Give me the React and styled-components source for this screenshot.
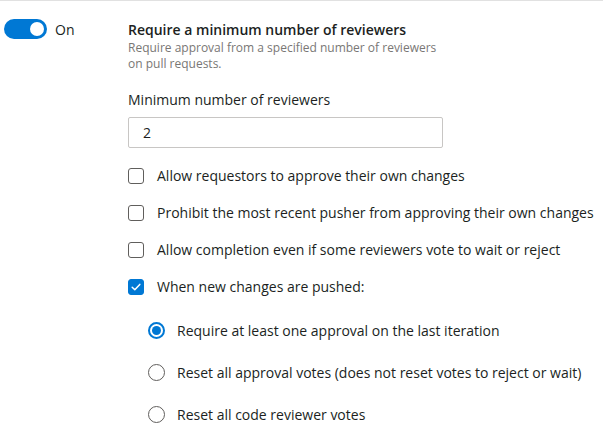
import React from "react";
import styled, { createGlobalStyle } from "styled-components";

const Global = createGlobalStyle`
  html, body { margin: 0; padding: 0; background: #ffffff; overflow: hidden; }
  body { font-family: "Open Sans", "Noto Sans", sans-serif; color: #201f1e; }
`;

const Page = styled.div`
  width: 603px;
  height: 433px;
  border-top: 1px solid #e1e1e1;
  display: flex;
  box-sizing: border-box;
  overflow: hidden;
`;

const LeftCol = styled.div`
  width: 128px;
  padding: 18px 0 0 4px;
  box-sizing: border-box;
  display: flex;
  align-items: flex-start;
  flex-shrink: 0;
`;

const ToggleWrap = styled.div`
  display: flex;
  align-items: center;
  gap: 8px;
`;

const Track = styled.div`
  width: 43px;
  height: 20px;
  border-radius: 10px;
  background: #0078d4;
  display: flex;
  align-items: center;
  justify-content: flex-end;
  padding-right: 3px;
  box-sizing: border-box;
`;

const Thumb = styled.div`
  width: 14px;
  height: 14px;
  border-radius: 50%;
  background: #ffffff;
`;

const ToggleLabel = styled.span`
  font-size: 14px;
  color: #201f1e;
`;

const RightCol = styled.div`
  flex: 1;
  padding-top: 19px;
  display: flex;
  flex-direction: column;
  & > * { flex-shrink: 0; }
`;

const Title = styled.div`
  font-size: 14px;
  font-weight: 600;
  line-height: 20px;
  color: #201f1e;
`;

const Subtitle = styled.div`
  font-size: 12px;
  line-height: 16px;
  color: #797775;
  width: 318px;
`;

const FieldLabel = styled.div`
  margin-top: 18px;
  font-size: 14px;
  line-height: 20px;
  color: #201f1e;
`;

const Input = styled.div`
  margin-top: 7px;
  width: 315px;
  height: 31px;
  border: 1px solid #c8c6c4;
  border-radius: 2px;
  box-sizing: border-box;
  display: flex;
  align-items: center;
  padding-left: 14px;
  font-size: 14px;
  color: #201f1e;
`;

const Options = styled.div`
  margin-top: 9px;
  display: flex;
  flex-direction: column;
`;

const RadioGroup = styled.div`
  margin-top: 4px;
  display: flex;
  flex-direction: column;
`;

const Row = styled.div`
  display: flex;
  align-items: center;
  height: ${(p) => (p.$radio ? 42 : 37)}px;
  padding-left: ${(p) => (p.$radio ? 20 : 0)}px;
  gap: ${(p) => (p.$radio ? 12 : 13)}px;
  font-size: 14px;
  color: #201f1e;
  white-space: nowrap;
`;

const Box = styled.div`
  width: 16px;
  height: 16px;
  border-radius: 3px;
  box-sizing: border-box;
  border: 1px solid ${(p) => (p.$checked ? "#0078d4" : "#605e5c")};
  background: ${(p) => (p.$checked ? "#0078d4" : "#ffffff")};
  display: flex;
  align-items: center;
  justify-content: center;
  flex-shrink: 0;
`;

const Radio = styled.div`
  width: 17px;
  height: 17px;
  border-radius: 50%;
  box-sizing: border-box;
  border: ${(p) => (p.$checked ? "2px solid #0078d4" : "1px solid #605e5c")};
  display: flex;
  align-items: center;
  justify-content: center;
  flex-shrink: 0;
`;

const Dot = styled.div`
  width: 9px;
  height: 9px;
  border-radius: 50%;
  background: #0078d4;
`;

const Checkbox = ({ checked, children }) => (
  <Row>
    <Box $checked={checked}>
      {checked && (
        <svg width="12" height="12" viewBox="0 0 12 12">
          <path d="M2.2 6.3 L4.8 8.8 L9.8 3.4" fill="none" stroke="#fff" strokeWidth="1.5" strokeLinecap="round" strokeLinejoin="round" />
        </svg>
      )}
    </Box>
    <span>{children}</span>
  </Row>
);

const RadioOption = ({ checked, children }) => (
  <Row $radio>
    <Radio $checked={checked}>{checked && <Dot />}</Radio>
    <span>{children}</span>
  </Row>
);

export default function App() {
  return (
    <>
      <Global />
      <Page>
        <LeftCol>
          <ToggleWrap>
            <Track>
              <Thumb />
            </Track>
            <ToggleLabel>On</ToggleLabel>
          </ToggleWrap>
        </LeftCol>
        <RightCol>
          <Title>Require a minimum number of reviewers</Title>
          <Subtitle>Require approval from a specified number of reviewers on pull requests.</Subtitle>
          <FieldLabel>Minimum number of reviewers</FieldLabel>
          <Input>2</Input>
          <Options>
            <Checkbox>Allow requestors to approve their own changes</Checkbox>
            <Checkbox>Prohibit the most recent pusher from approving their own changes</Checkbox>
            <Checkbox>Allow completion even if some reviewers vote to wait or reject</Checkbox>
            <Checkbox checked>When new changes are pushed:</Checkbox>
            <RadioGroup>
              <RadioOption checked>Require at least one approval on the last iteration</RadioOption>
              <RadioOption>Reset all approval votes (does not reset votes to reject or wait)</RadioOption>
              <RadioOption>Reset all code reviewer votes</RadioOption>
            </RadioGroup>
          </Options>
        </RightCol>
      </Page>
    </>
  );
}
